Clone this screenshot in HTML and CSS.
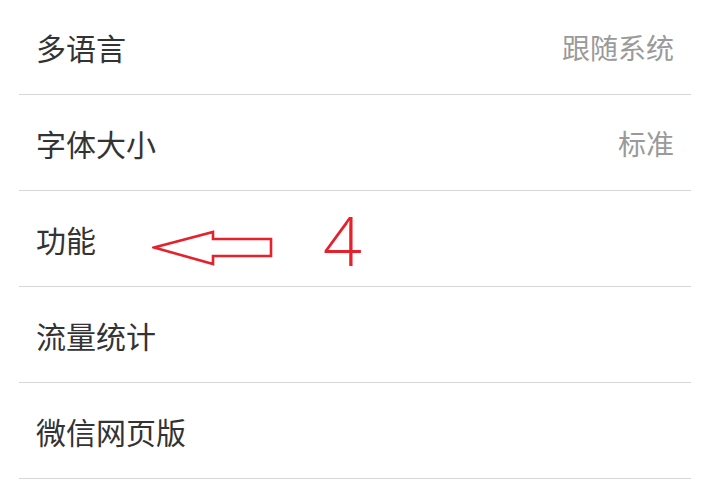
FILE: index.html
```html
<!DOCTYPE html>
<html lang="zh-CN">
<head>
<meta charset="utf-8">
<link rel="stylesheet" href="styles.css">
</head>
<body>
<ul class="list">
  <li class="row"><span class="label">多语言</span><span class="value">跟随系统</span></li>
  <li class="row"><span class="label">字体大小</span><span class="value">标准</span></li>
  <li class="row row-marked"><span class="label">功能</span>
    <svg class="arrow" width="124" height="38" viewBox="0 0 124 38">
      <path d="M2 17.5 L61 2 L61 9 L119 9 L119 26 L61 26 L61 34 Z" fill="none" stroke="#e5212c" stroke-width="2.6" stroke-linejoin="miter"/>
    </svg>
    <span class="mark">4</span>
  </li>
  <li class="row"><span class="label">流量统计</span></li>
  <li class="row"><span class="label">微信网页版</span></li>
</ul>
</body>
</html>
```
FILE: styles.css
```css
html, body {
  margin: 0;
  padding: 0;
  background: #ffffff;
}
body {
  width: 715px;
  height: 489px;
  overflow: hidden;
  font-family: "Noto Sans CJK SC", "Noto Sans", sans-serif;
}
.list {
  list-style: none;
  margin: -1px 24px 0 19px;
  padding: 0;
}
.row {
  position: relative;
  height: 95px;
  border-bottom: 1px solid #d6d6d6;
  display: flex;
  align-items: center;
  justify-content: space-between;
  padding: 0 17px 0 17px;
}
.label {
  font-size: 30px;
  color: #333333;
  line-height: 1;
}
.value {
  font-size: 28px;
  color: #9a9a9a;
  line-height: 1;
}
.arrow {
  position: absolute;
  left: 133px;
  top: 39px;
}
.mark {
  position: absolute;
  left: 304px;
  top: 15px;
  font-family: "Open Sans", "Liberation Sans", sans-serif;
  font-weight: 300;
  font-size: 68px;
  line-height: 1;
  color: #e5212c;
}
```
